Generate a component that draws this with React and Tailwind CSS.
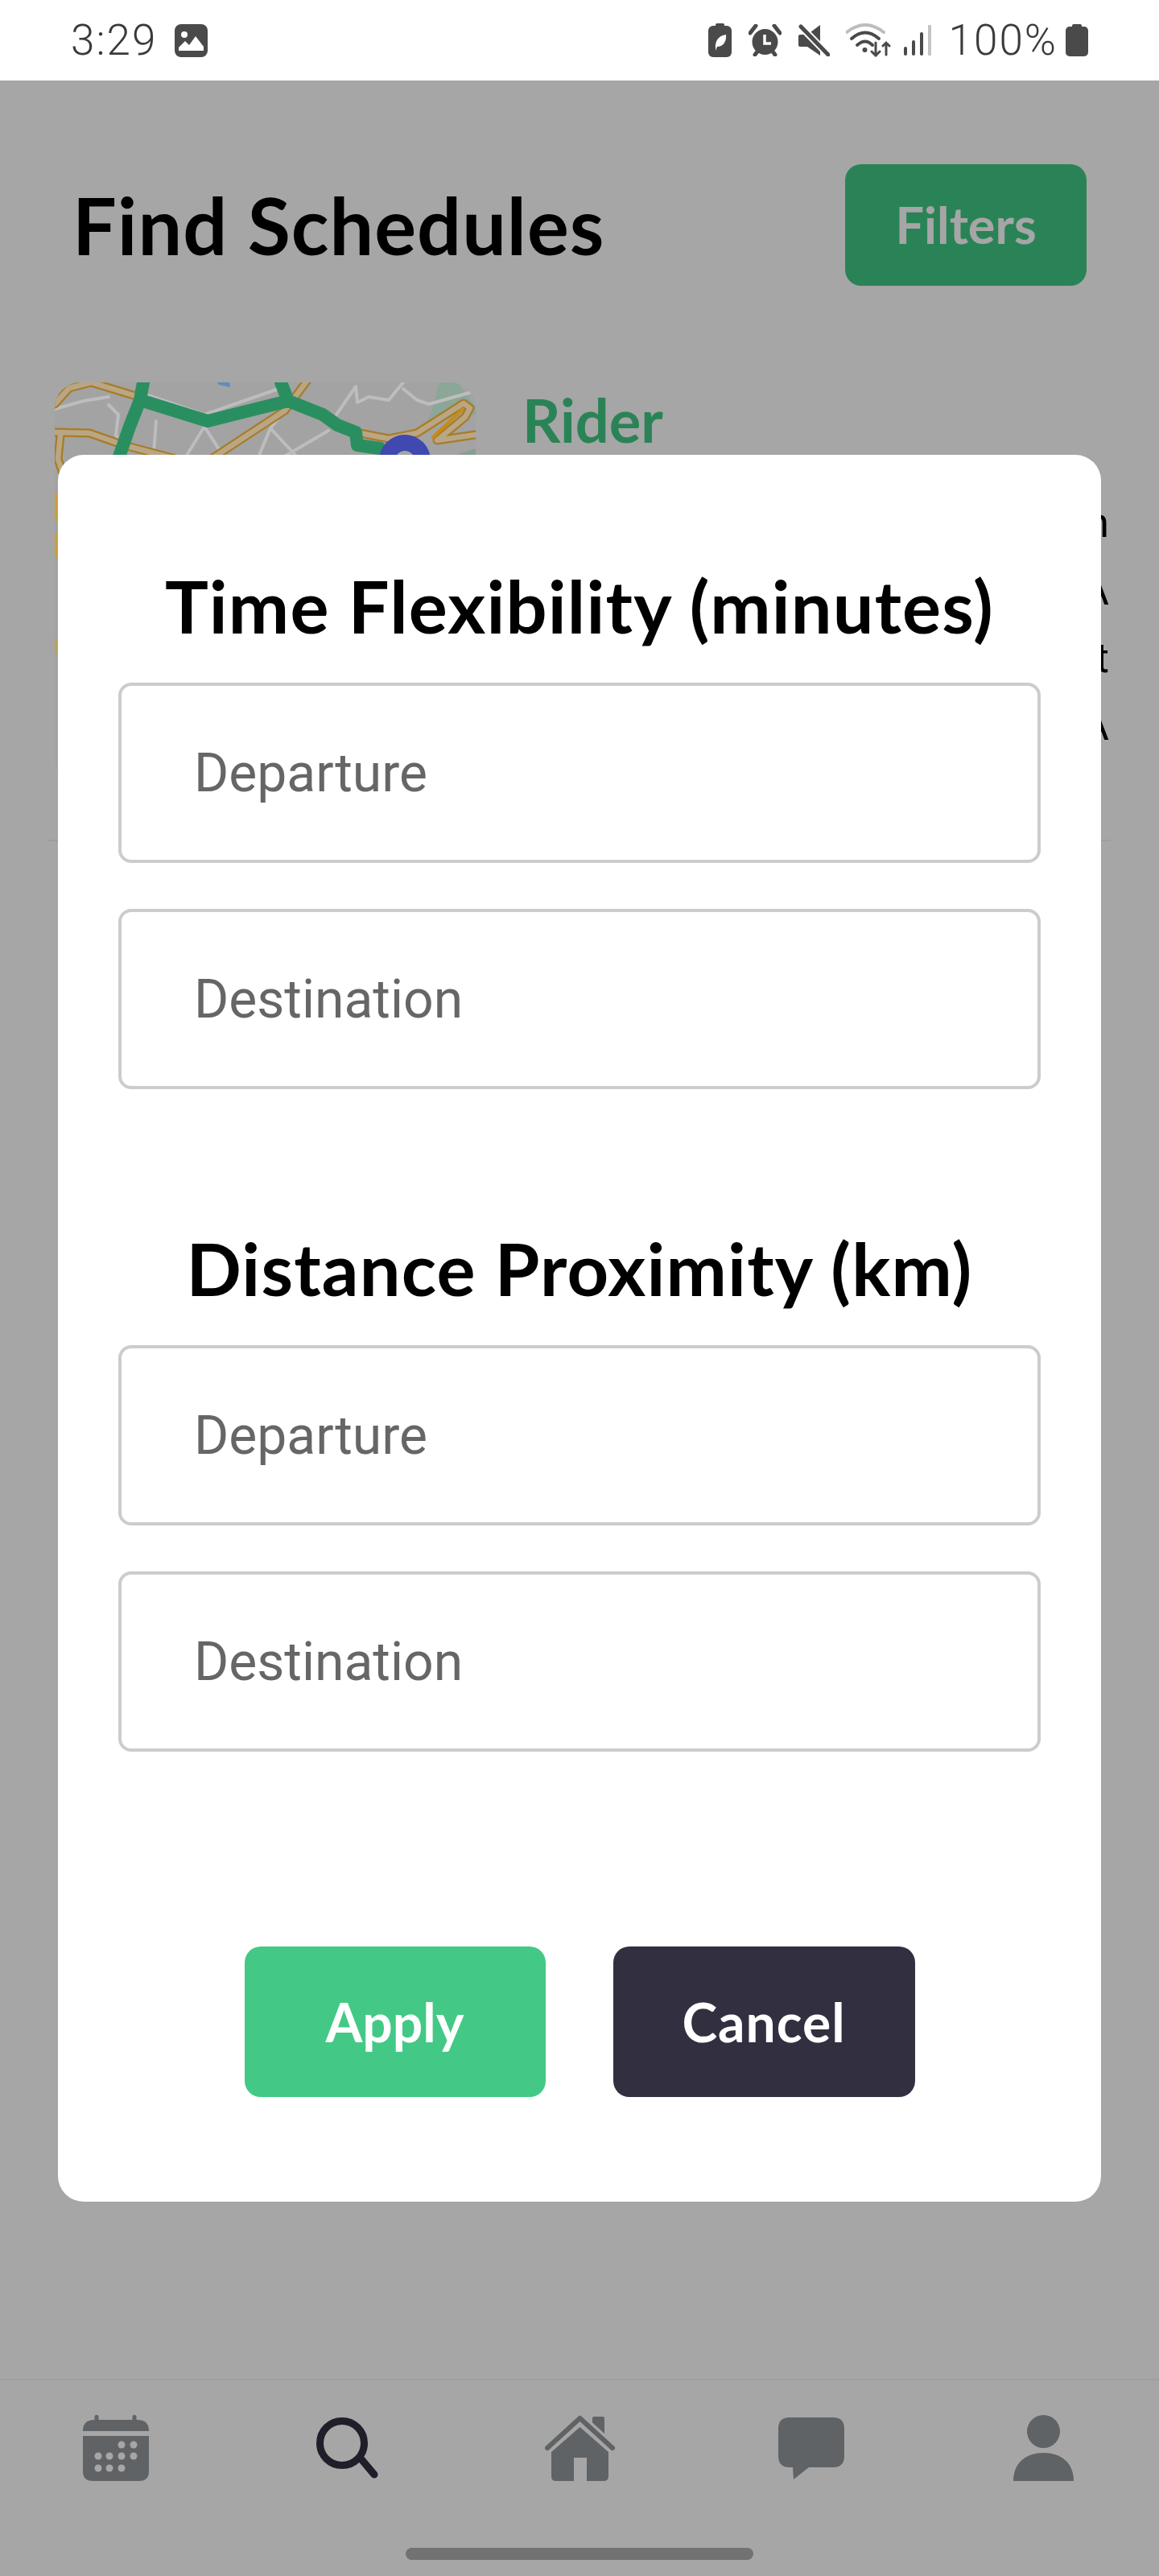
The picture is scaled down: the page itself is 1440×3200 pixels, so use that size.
import React from "react";

const display = "font-['Lato',sans-serif]";
const roboto = "font-['Roboto',sans-serif]";

const StatusIcons = () => (
  <div className="flex items-center">
    {/* battery saver */}
    <svg width="29" height="42" viewBox="0 0 29 42" fill="#4a4a4a">
      <rect x="9" y="0" width="11" height="6" rx="2" />
      <rect x="0" y="3" width="29" height="39" rx="6" />
      <path d="M9 31 C8 22 13 15 22 14 C23 23 18 29 11 29 L9 34 Z" fill="#fff" />
    </svg>
    {/* alarm */}
    <svg className="ml-[21px]" width="41" height="40" viewBox="0 0 41 40" fill="#4a4a4a">
      <circle cx="20.5" cy="22" r="16" />
      <path d="M2 11 L9 2 M39 11 L32 2" stroke="#4a4a4a" strokeWidth="5" strokeLinecap="round" />
      <path d="M8 38 L11 34 M33 38 L30 34" stroke="#4a4a4a" strokeWidth="5" strokeLinecap="round" />
      <path d="M20 13 V24 H28" stroke="#fff" strokeWidth="3.5" fill="none" />
    </svg>
    {/* mute */}
    <svg className="ml-[21px]" width="39" height="40" viewBox="0 0 39 40" fill="#4a4a4a">
      <path d="M0 15 Q0 13 2 13 H11 L27 1 V39 L11 28 H2 Q0 28 0 26 Z" />
      <path d="M2 2 L38 39" stroke="#fff" strokeWidth="9" />
      <path d="M3 3 L37 38" stroke="#4a4a4a" strokeWidth="5" strokeLinecap="round" />
    </svg>
    {/* wifi */}
    <svg className="ml-[20px]" width="56" height="42" viewBox="0 0 56 42" fill="none" strokeLinecap="round">
      <path d="M1 11 Q24 -7 47 11" stroke="#bdbdbd" strokeWidth="4" />
      <path d="M7 19 Q24 4 41 19" stroke="#4a4a4a" strokeWidth="4" />
      <path d="M14 27 Q24 18 33 27" stroke="#4a4a4a" strokeWidth="4" />
      <circle cx="23.5" cy="33" r="3" fill="#4a4a4a" />
      <path d="M37 24 V40 M32 35 L37 40 L42 35" stroke="#4a4a4a" strokeWidth="3" />
      <path d="M50 39 V24 M46 28 L50 24 L54 28" stroke="#4a4a4a" strokeWidth="3" />
    </svg>
    {/* signal */}
    <svg className="ml-[15px]" width="35" height="38" viewBox="0 0 35 38">
      <rect x="1" y="27" width="4" height="11" rx="2" fill="#4a4a4a" />
      <rect x="11" y="19" width="4" height="19" rx="2" fill="#4a4a4a" />
      <rect x="21" y="9" width="4" height="29" rx="2" fill="#4a4a4a" />
      <rect x="31" y="0" width="4" height="38" rx="1" fill="#c4c4c4" />
    </svg>
    <span className={`${roboto} ml-[22px] text-[53px] font-light leading-none tracking-[2px] text-[#3a3a3a]`}>100%</span>
    {/* battery */}
    <svg className="ml-[10px]" width="28" height="40" viewBox="0 0 28 40" fill="#4a4a4a">
      <rect x="8" y="0" width="12" height="6" rx="2" />
      <rect x="0" y="3" width="28" height="37" rx="5" />
    </svg>
  </div>
);

const MapThumb = () => (
  <svg className="relative z-20 shrink-0 rounded-[32px]" width="523" height="500" viewBox="0 0 523 500" fill="none" strokeLinejoin="round" strokeLinecap="round">
    <rect width="523" height="500" fill="#a3a3a3" />
    <path d="M470 30 L478 0 L500 0 L523 30 L523 40 L463 50 Z" fill="#8ba797" />
    <path d="M478 97 L523 82 L523 100 L480 100 Z" fill="#889e90" />
    <path d="M202 0 H217 L218 6 L204 3 Z" fill="#5d8cc0" />
    <g stroke="#bdbdbd" strokeWidth="4">
      <path d="M0 33 L36 23 L67 18" />
      <path d="M67 28 L79 40 L76 65 L88 95" />
      <path d="M113 15 L186 40 L278 8" />
      <path d="M126 48 L122 100" />
      <path d="M158 100 L186 55 L215 100" />
      <path d="M268 57 L250 100 M268 57 L308 100 M286 35 L268 57" />
      <path d="M340 60 L268 102" />
      <path d="M350 40 L374 5 L376 25 L390 18 L415 22 L433 0" />
      <path d="M433 8 L450 22 L465 27 L518 12" />
    </g>
    {/* highways */}
    <g strokeWidth="11" stroke="#a87c28">
      <path d="M0 27 L18 7 L45 0 L101 17" />
      <path d="M0 62 L43 63 L86 78 L154 96" />
      <path d="M7 66 L4 95 L14 125" />
      <path d="M315 -4 L286 35 L193 96" />
      <path d="M379 63 L415 70 L450 63 L508 26 L516 32 L510 43 L475 72 L523 65" />
    </g>
    <g strokeWidth="6.5" stroke="#b9a685">
      <path d="M0 27 L18 7 L45 0 L101 17" />
      <path d="M0 62 L43 63 L86 78 L154 96" />
      <path d="M7 66 L4 95 L14 125" />
      <path d="M315 -4 L286 35 L193 96" />
      <path d="M379 63 L415 70 L450 63 L508 26 L516 32 L510 43 L475 72 L523 65" />
    </g>
    <path d="M470 68 L507 33" stroke="#c98a14" strokeWidth="4" />
    <path d="M100 20 L75 100" stroke="#a87c28" strokeWidth="3" />
    <path d="M2 140 V170 M2 190 V215 M0 320 V335" stroke="#c9a040" strokeWidth="5" />
    <path d="M110 0 L106 22 L190 48 L290 23 L281 0 M290 23 L333 40 L351 53 L374 62 L376 78 L404 82 M106 22 L93 55 L79 95 L70 135" stroke="#2a8f60" strokeWidth="16" />
    <circle cx="435" cy="97" r="32" fill="#3f49b0" />
    <circle cx="435" cy="97" r="12" fill="#a6a6a6" />
  </svg>
);

const NavBar = () => (
  <div className="border-t-2 border-[#f4f4f4] h-[245px] relative shrink-0">
    <div className="grid grid-cols-5 pt-[43px]">
      <div className="flex justify-center h-[82px] items-center">
        <svg width="82" height="82" viewBox="0 0 82 82" fill="#94989b">
          <rect x="14.5" y="0" width="5" height="10" rx="2" />
          <rect x="61.5" y="0" width="5" height="10" rx="2" />
          <path d="M0 20 Q0 6 14 6 H68 Q82 6 82 20 H0 Z" />
          <path d="M0 26 H82 V70 Q82 82 70 82 H12 Q0 82 0 70 Z" />
          <g fill="#fff">
            <circle cx="48" cy="37" r="4.5" />
            <circle cx="63" cy="37" r="4.5" />
            <circle cx="19" cy="51" r="4.5" />
            <circle cx="33" cy="51" r="4.5" />
            <circle cx="48" cy="51" r="4.5" />
            <circle cx="63" cy="51" r="4.5" />
            <circle cx="19" cy="66" r="4.5" />
            <circle cx="33" cy="66" r="4.5" />
            <circle cx="48" cy="66" r="4.5" />
          </g>
        </svg>
      </div>
      <div className="flex justify-center h-[82px] items-center">
        <svg width="78" height="76" viewBox="0 0 78 76" fill="none" stroke="#322f40" strokeWidth="9" strokeLinecap="round">
          <circle cx="32" cy="32" r="27.5" />
          <path d="M56 52 L72 71" />
        </svg>
      </div>
      <div className="flex justify-center h-[82px] items-center">
        <svg width="89" height="82" viewBox="0 0 89 82" fill="#94989b">
          <rect x="60" y="2" width="15" height="26" rx="2" />
          <path d="M4 41 L44.5 4 L85 41" fill="none" stroke="#fff" strokeWidth="13" />
          <path d="M4 41 L44.5 4 L85 41" fill="none" stroke="#94989b" strokeWidth="6" strokeLinecap="round" strokeLinejoin="round" />
          <path d="M44.5 15 L80 46 V76 Q80 82 74 82 H53 V53 H37 V82 H15 Q9 82 9 76 V46 Z" />
        </svg>
      </div>
      <div className="flex justify-center h-[82px] items-center">
        <svg width="82" height="77" viewBox="0 0 82 77" fill="#94989b">
          <path d="M14 0 H68 Q82 0 82 14 V48 Q82 62 68 62 H38 L19 77 L18 62 H14 Q0 62 0 48 V14 Q0 0 14 0 Z" />
        </svg>
      </div>
      <div className="flex justify-center h-[82px] items-center">
        <svg width="75" height="82" viewBox="0 0 75 82" fill="#94989b">
          <circle cx="37.5" cy="20.5" r="20.5" />
          <path d="M0 82 C0 60 15 47 37.5 47 C60 47 75 60 75 82 Z" />
        </svg>
      </div>
    </div>
    {/* gesture bar */}
    <div className="absolute left-[504px] top-[208px] w-[432px] h-[15px] rounded-full bg-[#b0b0b0]" />
  </div>
);

const Field = ({ label }) => (
  <div className={`${roboto} h-[224px] rounded-[16px] border-4 border-[#cccccc] flex items-center pl-[90px] text-[66px] text-[#666666]`}>
    {label}
  </div>
);

const FilterGroup = ({ title, className }) => (
  <div className={className}>
    <h2 className={`${display} text-center text-[90px] font-bold leading-[120px] tracking-[1.2px] text-black mb-[36px]`}>{title}</h2>
    <div className="flex flex-col gap-[57px]">
      <Field label="Departure" />
      <Field label="Destination" />
    </div>
  </div>
);

export default function App() {
  return (
    <div className="relative w-[1440px] h-[3200px] bg-white overflow-hidden flex flex-col">
      {/* Status bar */}
      <div className="relative z-30 h-[100px] shrink-0 bg-white flex items-center justify-between pl-[88px] pr-[88px]">
        <div className="flex items-center gap-[22px]">
          <span className={`${roboto} text-[53px] font-light leading-none tracking-[2px] text-[#3a3a3a]`}>3:29</span>
          <svg width="41" height="41" viewBox="0 0 41 41">
            <rect width="41" height="41" rx="8" fill="#4a4a4a" />
            <circle cx="12" cy="13" r="4" fill="#fff" />
            <path d="M5 33 V29 L13 21 L18 26 L26 15 L36 28 V33 Z" fill="#fff" />
          </svg>
        </div>
        <StatusIcons />
      </div>

      {/* Page */}
      <div className="flex-1">
        <div className="flex items-center justify-between pl-[90px] pr-[90px] pt-[104px]">
          <h1 className={`${display} text-[97px] font-bold tracking-[1px] text-black leading-none`}>Find Schedules</h1>
          <button className={`${display} w-[300px] h-[151px] rounded-[20px] bg-[#41c984] text-white text-[63px] font-bold`}>Filters</button>
        </div>

        <div className="mt-[120px] mx-[60px] pl-[8px] pr-[2px] pb-[68px] border-b-2 border-[#f2f2f2] flex">
          <MapThumb />
          <div className="ml-[58px] flex-1">
            <div className={`${display} mt-[5px] text-[74px] font-bold leading-[84px] text-[#41c984]`}>Rider</div>
            <div className={`${roboto} mt-[44px] text-right text-[52px] leading-[84px] text-black`}>
              <div>Location</div>
              <div>N/A</div>
              <div>Start</div>
              <div>N/A</div>
            </div>
          </div>
        </div>
      </div>

      <NavBar />

      {/* Dim layer */}
      <div className="absolute inset-0 z-10 bg-black/35" />

      {/* Filter modal */}
      <div className="absolute z-30 left-[72px] top-[565px] w-[1296px] h-[2170px] rounded-[32px] bg-white px-[75px] pt-[127px]">
        <FilterGroup title="Time Flexibility (minutes)" />
        <FilterGroup title="Distance Proximity (km)" className="mt-[162px]" />
        <div className="mt-[242px] flex justify-center gap-[84px]">
          <button className={`${display} w-[374px] h-[187px] rounded-[20px] bg-[#43c985] text-white text-[66px] font-bold`}>Apply</button>
          <button className={`${display} w-[375px] h-[187px] rounded-[20px] bg-[#322f40] text-white text-[66px] font-bold tracking-[1px]`}>Cancel</button>
        </div>
      </div>
    </div>
  );
}
